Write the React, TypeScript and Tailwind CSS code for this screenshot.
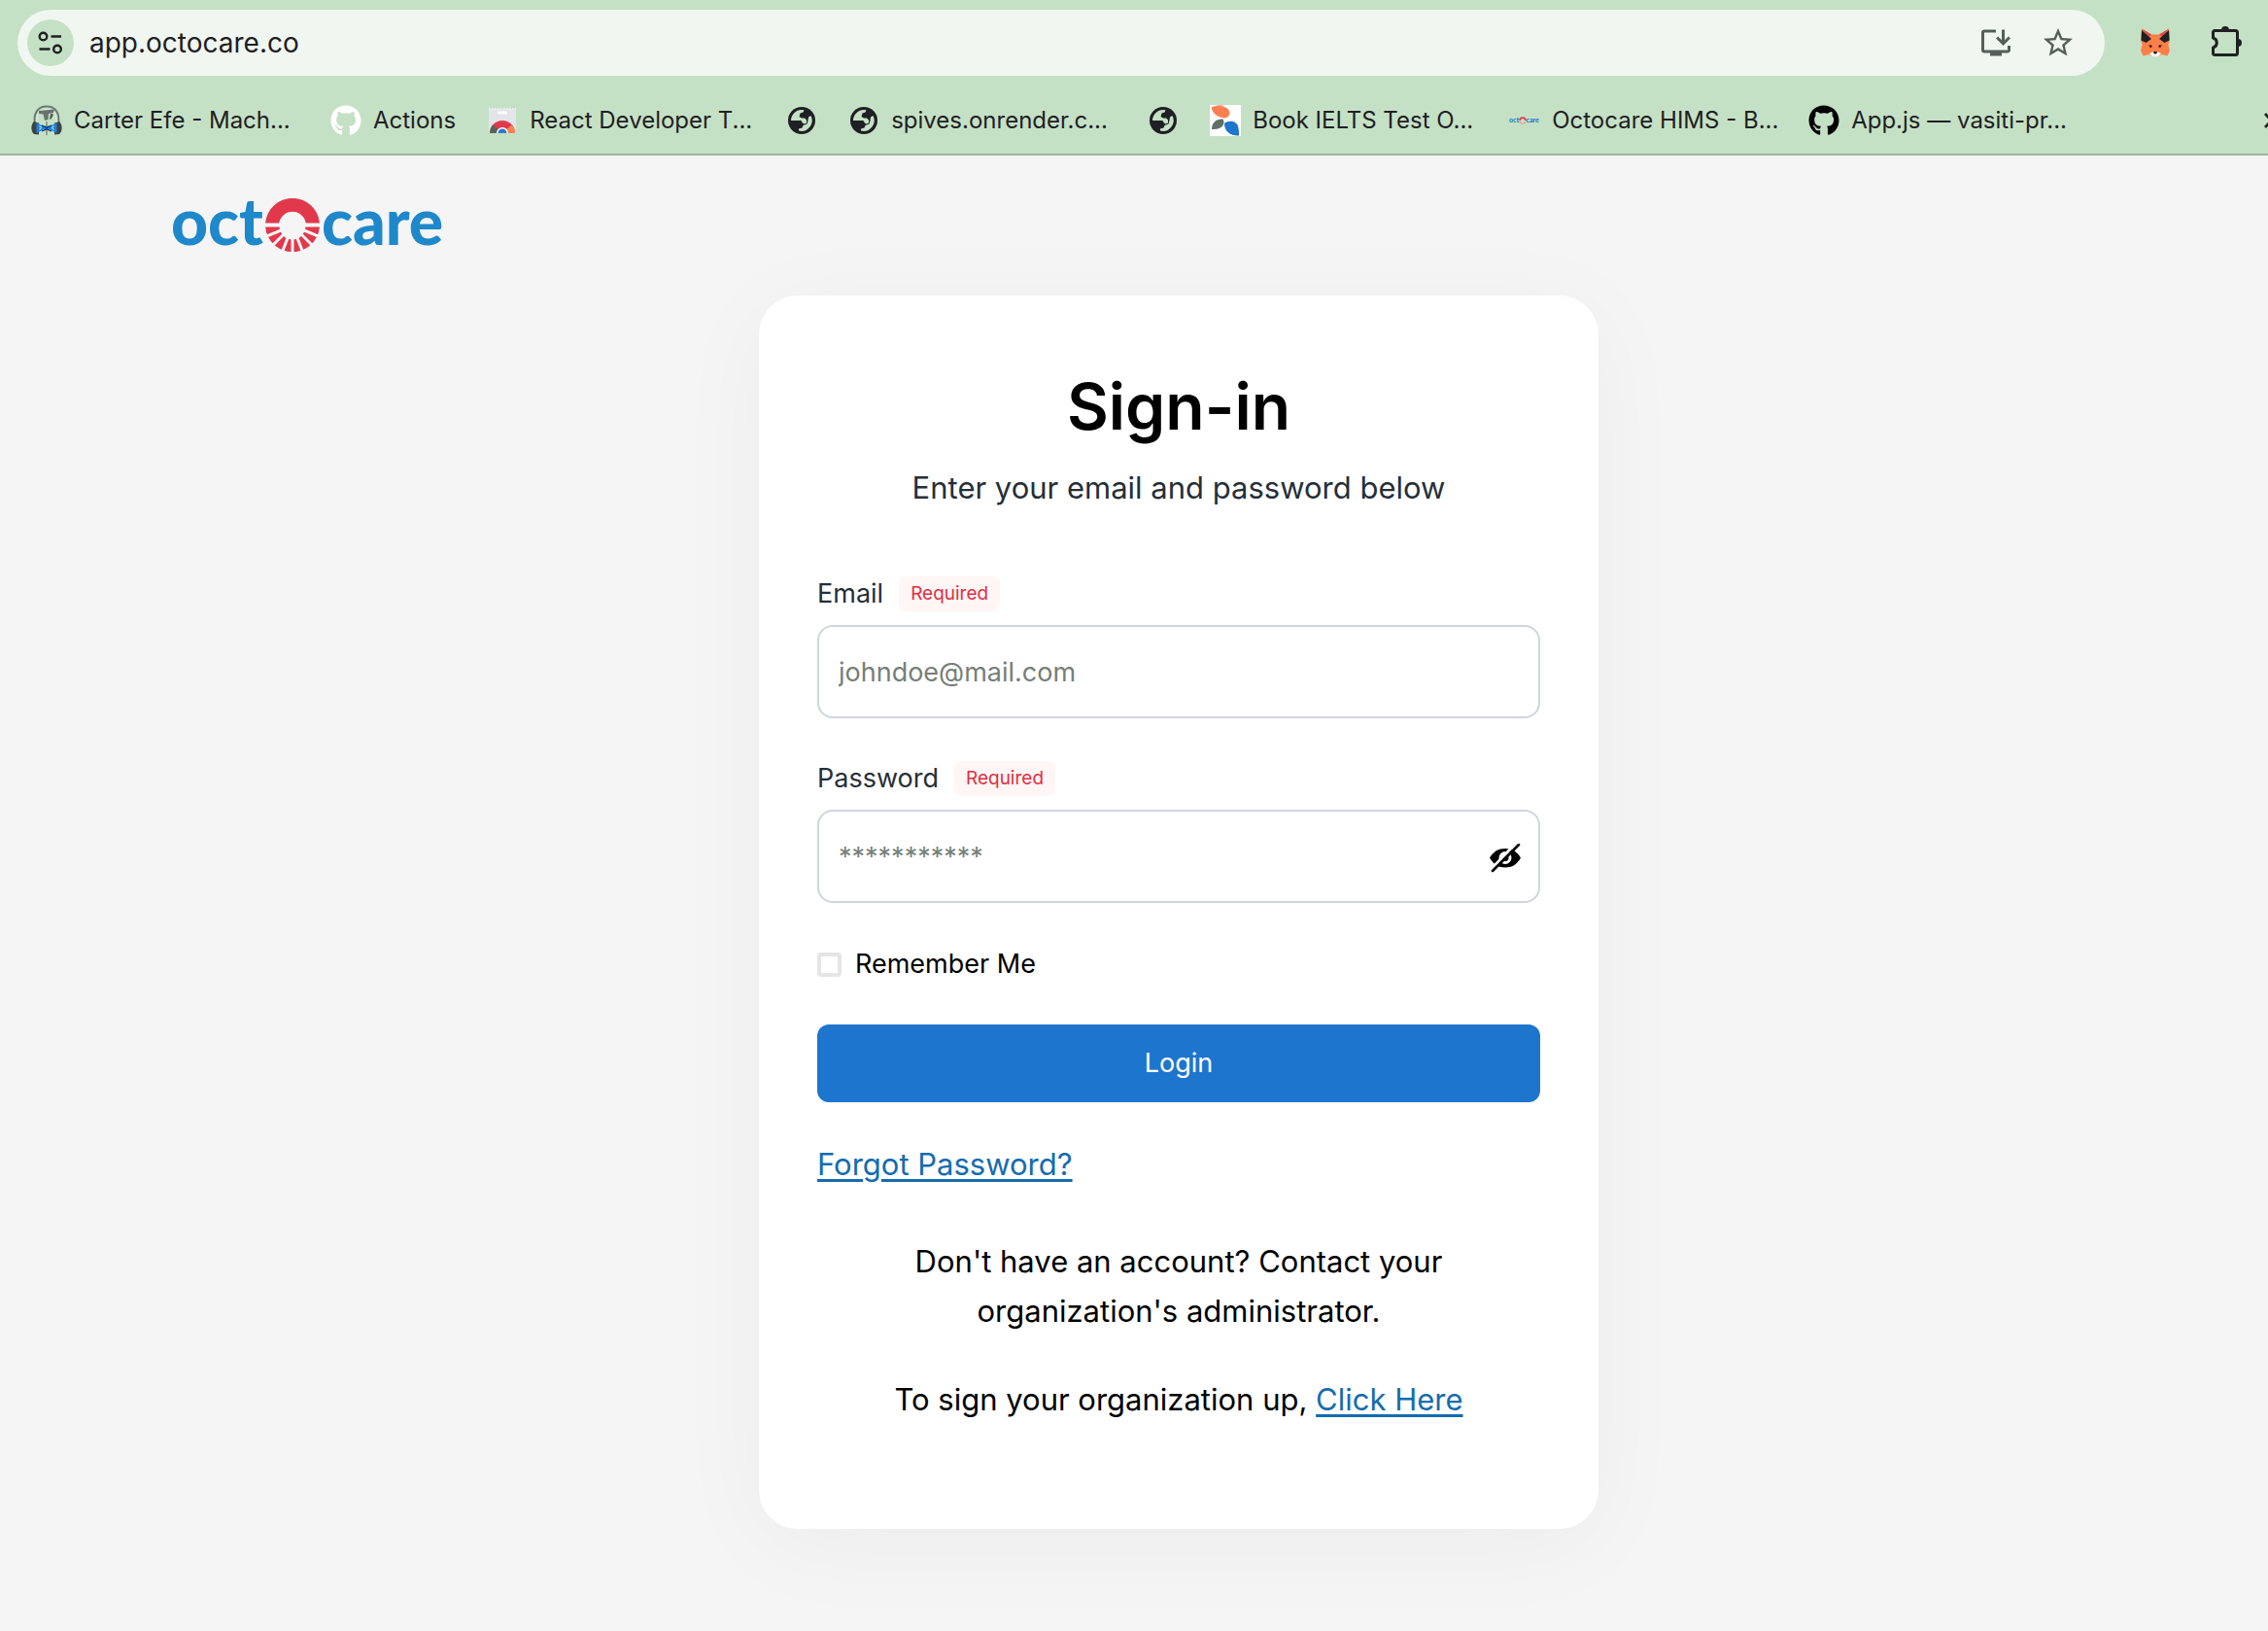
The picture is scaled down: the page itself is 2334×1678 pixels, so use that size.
import { useState } from "react";
import type { ReactNode } from "react";
import { FaGithub } from "react-icons/fa";
import { MdInstallDesktop, MdStarBorder } from "react-icons/md";

function TuneIcon() {
  return (
    <svg viewBox="0 0 26 24" className="h-6 w-[26px]" fill="none" stroke="#1f2023" strokeWidth="2.4">
      <circle cx="5.500" cy="5.500" r="3.800" />
      <path d="M13.500 5.500H24M1.500 18.500H12.500" />
      <circle cx="20" cy="18.500" r="3.800" />
    </svg>
  );
}

function GlobeIcon() {
  return (
    <svg viewBox="0 0 28 28" className="mx-0.5 h-7 w-7 shrink-0">
      <circle cx="14" cy="14" r="14" fill="#1f2023" />
      <path
        fill="#c5e1c5"
        d="M3 14A11 11 0 0 1 16.500 3.300L15.500 5.500L12.500 6.500L11.500 10L14 11.500H17L19 13.500V16.500L16.500 17.500L14.500 16L13.500 14Z"
      />
      <path fill="#c5e1c5" d="M23.500 9A11 11 0 0 1 11 24.600V22.500L14.500 21.500L15.500 19L19.500 17.500L20.500 14L21 10.500Z" />
    </svg>
  );
}

function HeadphonesIcon() {
  return (
    <svg viewBox="0 0 32 32" className="h-8 w-8 shrink-0" fill="none">
      <path d="M4 21C2 8 7 1.500 16 1.500S30 8 28 21" stroke="#6d7a73" strokeWidth="2" />
      <path d="M6 18C5 9 9 4.500 16 4.500S27 9 26 18" stroke="#dfe9e0" strokeWidth="1.200" />
      <path d="M8 6L24 4.500L23 8L18 9L17.500 15L14 16L12.500 9.500L8 9Z" fill="#6a726d" />
      <path d="M20 9L23 9.500L21 14L19 15Z" fill="#4f5652" />
      <path d="M3 17L8 18.500V30.500L3 30C-.5 27 -.5 20 3 17ZM29 17L24 18.500V30.500L29 30C32.500 27 32.500 20 29 17Z" fill="#3c4441" />
      <path d="M5.500 18L12 21.500H20L26.500 18V29L20 25.800H12L5.500 29Z" fill="#1f7fdb" />
      <path d="M11 21L16 23.500L21 21M11 27L16 25L21 27" stroke="#15395f" strokeWidth="1.200" />
      <path d="M16 17V22M16 26V31" stroke="#7c8781" strokeWidth="1.400" />
      <path d="M8.500 21.500L10.500 23.500L8.500 25.500M23.500 21.500L21.500 23.500L23.500 25.500" stroke="#a8d4fb" strokeWidth="1.200" />
    </svg>
  );
}

function StoreIcon() {
  return (
    <svg viewBox="0 0 32 32" className="h-8 w-8 shrink-0">
      <path d="M2 4H30V29H2Z" fill="#e3e5e8" />
      <path d="M2 4H30" stroke="#f7f8f9" strokeWidth="1.500" strokeDasharray="1.500 1.500" />
      <rect x="11" y="6.500" width="10" height="3" rx="1" fill="#fafbfb" />
      <path d="M3 29A13 13 0 0 1 29 29Z" fill="#e2384b" />
      <path d="M3 29A13 13 0 0 1 6 20.500L12 25L10 29Z" fill="#55655c" />
      <path d="M29 29A13 13 0 0 0 26 20.500L20 25L22 29Z" fill="#fb8150" />
      <path d="M10 29A6 6 0 0 1 22 29Z" fill="#fff" />
      <path d="M11.500 29A4.500 4.500 0 0 1 20.500 29Z" fill="#2d78cf" />
    </svg>
  );
}

function PetalsIcon() {
  return (
    <svg viewBox="0 0 32 32" className="h-8 w-8 shrink-0">
      <path d="M0 0H32V32H0Z" fill="#fff" />
      <path d="M1.500 2.500C7 -.5 14 .5 18 3.500C22 7 21 12.500 15.500 13.500C10 13 3 10 1.500 2.500Z" fill="#fa8050" />
      <path d="M7 0H15L11 1.500Z" fill="#f6a0a0" />
      <path d="M2 25C2 18 7 14 13.500 14.500C16.500 19 13 26 2 25Z" fill="#5f6f66" />
      <path d="M15 19C19 15.500 26 16 28.500 20.500C30 24 30 28 30 31.500C22 31.500 15 28 15 19Z" fill="#1e75ce" />
    </svg>
  );
}

function MiniLogoIcon() {
  return (
    <svg viewBox="0 0 32 32" className="h-8 w-8 shrink-0" fontFamily="Lato, sans-serif" fontWeight="900" fontSize="7">
      <text x="0" y="18" fill="#1e75ce">oct</text>
      <text x="17.500" y="18" fill="#1e75ce">care</text>
      <path d="M10.300 16A3.700 3.700 0 0 1 17.700 16H16A2 2 0 0 0 12 16Z" fill="#e2384b" />
      <path d="M10.500 17A3.600 3.600 0 0 0 17.500 17H16A2 2 0 0 1 12 17Z" fill="#ee8f97" />
    </svg>
  );
}

function FoxIcon() {
  return (
    <svg viewBox="0 0 30 30" className="h-[30px] w-[30px]">
      <path d="M1 .5L11 6.500H19L29 .5L30 12L28.500 17L30 23L27.500 28.500L21.500 27L18 29H12L8.500 27L2.500 28.500L0 23L1.500 17L0 12Z" fill="#fb8048" />
      <path d="M1 .5L11 6.500L8 9ZM29 .5L19 6.500L22 9Z" fill="#e2484b" />
      <path d="M1 2L11 11L5.500 15L.5 12.500ZM29 2L19 11L24.500 15L29.500 12.500Z" fill="#1f2023" />
      <path d="M7.500 16.500L12 18.500L11 20L9 19.500ZM22.500 16.500L18 18.500L19 20L21 19.500Z" fill="#e2384b" />
      <circle cx="10.300" cy="18.500" r="1.200" fill="#1f2023" />
      <circle cx="19.700" cy="18.500" r="1.200" fill="#1f2023" />
      <path d="M9 26L12.500 24.500H17.500L21 26L18 29H12Z" fill="#fff" />
      <path d="M13 24H17L16.500 26L15 26.800L13.500 26Z" fill="#1f2023" />
    </svg>
  );
}

function PuzzleIcon() {
  return (
    <svg viewBox="0 0 32 36" className="h-9 w-8">
      <path
        d="M3.500 5.500H24.500Q26.500 5.500 26.500 7.500V28.500Q26.500 30.500 24.500 30.500H3.500Q1.500 30.500 1.500 28.500V23A5.200 5.200 0 0 0 1.500 13V7.500Q1.500 5.500 3.500 5.500Z"
        fill="none"
        stroke="#1f2023"
        strokeWidth="3"
        strokeLinejoin="round"
      />
      <path d="M10 5A4 4 0 0 1 18 5ZM27 14A4 4 0 0 1 27 22Z" fill="#1f2023" />
    </svg>
  );
}

function EyeOffIcon() {
  return (
    <svg viewBox="0 0 32 30" className="h-[30px] w-8">
      <path d="M0 14.500C4 8 9 5 16 5S28 8 32 14.500C28 21.500 23 24.500 16 24.500S4 21.500 0 14.500Z" fill="#000" />
      <circle cx="16" cy="14.500" r="5" fill="none" stroke="#fff" strokeWidth="3" />
      <path d="M0 28L26.500 0" stroke="#fff" strokeWidth="3" />
      <path d="M3 28L30 1" stroke="#000" strokeWidth="2.600" strokeLinecap="round" />
    </svg>
  );
}

function LogoRing() {
  const gaps = ["M28 28L0 39.600", "M28 28L6 50", "M28 28L16.400 58", "M28 28V58", "M28 28L39.600 58", "M28 28L50 50", "M28 28L56 39.600"];
  return (
    <svg viewBox="0 0 56 56" className="h-14 w-14">
      <path d="M.1 25.500A28 28 0 0 1 55.900 25.500H41.800A14 14 0 0 0 14.200 25.500Z" fill="#e2384b" />
      <path d="M.1 29.500A28 28 0 0 0 55.900 29.500H41A13 13 0 0 1 15 29.500Z" fill="#e2384b" />
      {gaps.map((d) => (
        <path key={d} d={d} stroke="#f5f5f5" strokeWidth="3" />
      ))}
      <circle cx="28" cy="28" r="13.500" fill="#f5f5f5" />
    </svg>
  );
}

function Logo() {
  return (
    <a
      href="#home"
      aria-label="octocare"
      className="flex w-fit items-start gap-0.5 font-[Lato,sans-serif] text-[66px] leading-[46px] font-black text-[#1e88cb]"
    >
      <span>oct</span>
      <LogoRing />
      <span>care</span>
    </a>
  );
}

type Bookmark = { icon: ReactNode; label?: string; wide?: boolean; name: string };

const bookmarks: Bookmark[] = [
  { name: "Carter Efe", icon: <HeadphonesIcon />, label: "Carter Efe - Mach...", wide: true },
  { name: "Actions", icon: <FaGithub className="size-8 shrink-0 text-white" />, label: "Actions" },
  { name: "React Developer Tools", icon: <StoreIcon />, label: "React Developer T...", wide: true },
  { name: "Website", icon: <GlobeIcon /> },
  { name: "spives", icon: <GlobeIcon />, label: "spives.onrender.c...", wide: true },
  { name: "Other website", icon: <GlobeIcon /> },
  { name: "Book IELTS", icon: <PetalsIcon />, label: "Book IELTS Test O...", wide: true },
  { name: "Octocare HIMS", icon: <MiniLogoIcon />, label: "Octocare HIMS - B...", wide: true },
  { name: "App.js", icon: <FaGithub className="size-8 shrink-0 text-black" />, label: "App.js — vasiti-pr...", wide: true },
];

function BrowserBar() {
  return (
    <header className="overflow-hidden border-b-2 border-[#9fb3a2] bg-[#c5e1c5] text-[#1f2023]">
      <div className="flex items-center pt-2.5 pr-[26px] pl-[18px]">
        <div className="flex h-[68px] flex-1 items-center rounded-full bg-[#f0f7f0] pr-[30px] pl-2.5">
          <button aria-label="Site information" className="flex size-12 items-center justify-center rounded-full bg-[#c5e1c5]">
            <TuneIcon />
          </button>
          <input
            aria-label="Address"
            defaultValue="app.octocare.co"
            className="ml-4 min-w-0 flex-1 bg-transparent text-[28px] outline-none"
          />
          <div className="flex items-center gap-7 text-[#555f59]">
            <button aria-label="Install app">
              <MdInstallDesktop className="size-9" />
            </button>
            <button aria-label="Bookmark this page">
              <MdStarBorder className="size-9" />
            </button>
          </div>
        </div>
        <button aria-label="Wallet" className="ml-[37px]">
          <FoxIcon />
        </button>
        <button aria-label="Extensions" className="ml-[43px]">
          <PuzzleIcon />
        </button>
      </div>
      <nav aria-label="Bookmarks" className="flex h-20 items-center pt-3 pl-8">
        <div className="flex flex-1 items-center gap-8">
          {bookmarks.map((b) => (
            <a
              key={b.name}
              href="#bookmark"
              aria-label={b.name}
              className={`flex shrink-0 items-center gap-3 text-2xl whitespace-nowrap ${b.wide ? "w-[276px]" : ""}`}
            >
              {b.icon}
              {b.label && <span>{b.label}</span>}
            </a>
          ))}
        </div>
        <button aria-label="More bookmarks" className="-mr-3.5 shrink-0">
          <svg viewBox="0 0 18 16" className="h-4 w-[18px]" fill="none" stroke="#1f2023" strokeWidth="2.600">
            <path d="M1 1L7.500 8L1 15M9 1L15.500 8L9 15" />
          </svg>
        </button>
      </nav>
    </header>
  );
}

function FieldLabel({ htmlFor, children }: { htmlFor: string; children: ReactNode }) {
  return (
    <div className="flex h-9 items-center gap-4">
      <label htmlFor={htmlFor} className="text-[27px] text-[#252f38]">
        {children}
      </label>
      <span className="flex h-9 items-center rounded-lg bg-[#fff6f5] px-3 text-[19px] text-[#e02f44]">Required</span>
    </div>
  );
}

const fieldClass =
  "h-24 w-full rounded-2xl border-2 border-[#d0d5dd] bg-white px-5 text-[27px] text-black outline-none placeholder:text-[#757f78]";
const linkClass = "text-[#146cb0] underline decoration-[3px] underline-offset-4";

function SignInCard() {
  const [shown, setShown] = useState(false);
  return (
    <form
      onSubmit={(e) => e.preventDefault()}
      className="w-full max-w-[864px] rounded-[40px] bg-white px-15 pt-[74px] pb-27 text-[31px] text-black shadow-[0_16px_100px_rgba(0,0,0,0.04)]"
    >
      <h1 className="text-center text-[66px] leading-[80px] font-semibold">Sign-in</h1>
      <p className="mt-5 mb-[67px] text-center leading-12 text-[#252f38]">Enter your email and password below</p>

      <FieldLabel htmlFor="email">Email</FieldLabel>
      <input id="email" type="email" placeholder="johndoe@mail.com" className={`mt-3.5 mb-11 ${fieldClass}`} />

      <FieldLabel htmlFor="password">Password</FieldLabel>
      <div className="relative mt-3.5">
        <input id="password" type={shown ? "text" : "password"} placeholder="***********" className={fieldClass} />
        <button
          type="button"
          aria-label="Show password"
          onClick={() => setShown(!shown)}
          className="absolute inset-y-0 right-5 flex items-center pt-1"
        >
          <EyeOffIcon />
        </button>
      </div>

      <label className="mt-[43px] flex h-10 items-center gap-3.5 text-[27px]">
        <input type="checkbox" className="size-[25px] appearance-none rounded-sm border-4 border-[#e5e5e5] checked:bg-[#1e75ce]" />
        Remember Me
      </label>

      <button type="submit" className="mt-[42px] h-20 w-full rounded-xl bg-[#1e75ce] text-[27px] text-white">
        Login
      </button>

      <div className="mt-10 leading-12">
        <a href="#forgot" className={linkClass}>
          Forgot Password?
        </a>
      </div>

      <p className="mx-auto mt-[50px] max-w-[600px] text-center leading-[51px]">
        Don't have an account? Contact your organization's administrator.
      </p>
      <p className="mt-10 text-center leading-[51px]">
        To sign your organization up,{" "}
        <a href="#signup" className={linkClass}>
          Click Here
        </a>
      </p>
    </form>
  );
}

export default function App() {
  return (
    <div className="min-h-screen bg-[#f5f5f5] font-[Inter,sans-serif]">
      <BrowserBar />
      <main className="pt-11">
        <div className="pl-44">
          <Logo />
        </div>
        <div className="mt-11 flex justify-center pb-11 pl-23">
          <SignInCard />
        </div>
      </main>
    </div>
  );
}
